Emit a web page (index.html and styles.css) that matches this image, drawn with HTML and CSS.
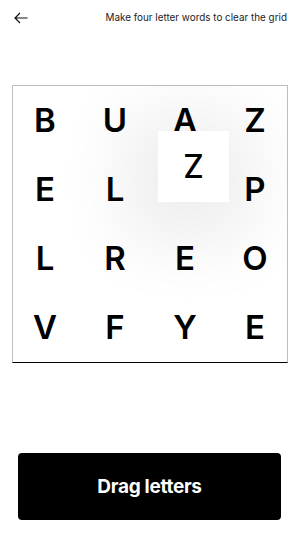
FILE: index.html
```html
<!DOCTYPE html>
<html lang="en">
    <head>
        <meta charset="utf-8">
        <title>Four letter words</title>
        <meta name="viewport" content="width=device-width, initial-scale=1.0">
        <link rel="stylesheet" href="styles.css">
    </head>
    <body>
        <header class="topbar">
            <a href="#" class="back">
                <svg width="14" height="12" viewBox="0 0 14 12">
                    <path d="M13.5 6H1M6 1L1 6l5 5" fill="none" stroke="#111" stroke-width="1.2"/>
                </svg>
            </a>
            <p class="hint">Make four letter words to clear the grid</p>
        </header>

        <main class="board">
            <div class="cell">B</div>
            <div class="cell">U</div>
            <div class="cell">A</div>
            <div class="cell">Z</div>
            <div class="cell">E</div>
            <div class="cell">L</div>
            <div class="cell empty"></div>
            <div class="cell">P</div>
            <div class="cell">L</div>
            <div class="cell">R</div>
            <div class="cell">E</div>
            <div class="cell">O</div>
            <div class="cell">V</div>
            <div class="cell">F</div>
            <div class="cell">Y</div>
            <div class="cell">E</div>

            <!-- tile being dragged -->
            <div class="dragTile">Z</div>
        </main>

        <button class="action">Drag letters</button>
    </body>
</html>
```

FILE: styles.css
```css
* {
    margin: 0;
    padding: 0;
    box-sizing: border-box;
}

body {
    background: #fff;
    font-family: Inter, "Noto Sans", sans-serif;
    color: #000;
}

.topbar {
    height: 34px;
    display: flex;
    align-items: center;
    justify-content: space-between;
    padding: 0 13px 0 14px;
}

.back {
    display: flex;
    margin-top: 1px;
}

.hint {
    font-size: 9.9px;
    color: #222;
}

.board {
    position: relative;
    overflow: hidden;
    margin: 51px 12px 0 12px;
    height: 278px;
    border: 1px solid #bdbdbd;
    border-bottom: 1px solid #000;
    display: grid;
    grid-template-columns: repeat(4, 70px);
    grid-template-rows: repeat(4, 1fr);
    justify-content: center;
}

.cell {
    display: flex;
    align-items: center;
    justify-content: center;
    font-size: 33px;
    font-weight: 600;
    line-height: 1;
}

.dragTile {
    position: absolute;
    left: 145px;
    top: 45px;
    width: 71px;
    height: 71px;
    background: #fff;
    display: flex;
    align-items: center;
    justify-content: center;
    font-size: 32px;
    font-weight: 500;
    box-shadow: -5px 12px 70px 30px rgba(0, 0, 0, 0.07);
}

.action {
    display: block;
    margin: 90px 19px 0 18px;
    width: 263px;
    height: 67px;
    background: #000;
    color: #fff;
    border: none;
    border-radius: 4px;
    font-family: Inter, "Noto Sans", sans-serif;
    font-size: 19px;
    font-weight: 700;
    letter-spacing: -0.3px;
}
```
